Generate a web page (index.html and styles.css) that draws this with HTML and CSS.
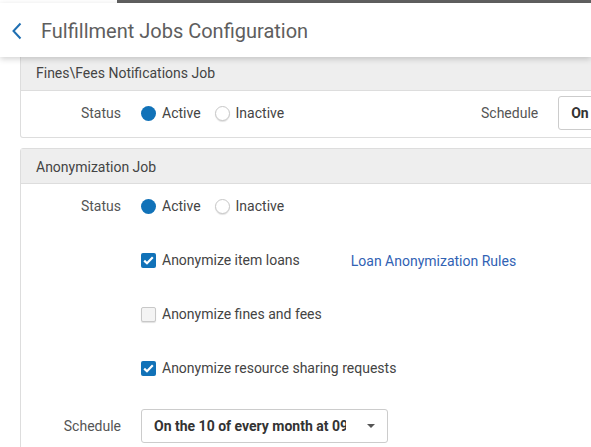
FILE: index.html
```html
<!DOCTYPE html>
<html>
<head>
<meta charset="utf-8">
<link rel="stylesheet" href="styles.css">
</head>
<body>
<div class="topstrip"><div class="strip-gap"></div><div class="strip-bar"></div></div>
<header class="pagehead">
  <svg class="back" width="12" height="18" viewBox="0 0 12 18"><path d="M9.5 1.5 L2.5 9 L9.5 16.5" fill="none" stroke="#1f6fb2" stroke-width="2"/></svg>
  <h1 class="title">Fulfillment Jobs Configuration</h1>
</header>
<main class="content">
  <section class="card card-first">
    <div class="card-head">Fines\Fees Notifications Job</div>
    <div class="card-body grid3">
      <div class="label">Status</div>
      <div class="radios">
        <span class="radio on"></span><span class="opt">Active</span>
        <span class="radio off"></span><span class="opt">Inactive</span>
      </div>
      <div class="sched">
        <span class="label2">Schedule</span>
        <div class="select narrow"><span class="sel-text">On the 1 of every month at 09:00</span></div>
      </div>
    </div>
  </section>
  <section class="card">
    <div class="card-head">Anonymization Job</div>
    <div class="card-body rows">
      <div class="row">
        <div class="label">Status</div>
        <div class="radios">
          <span class="radio on"></span><span class="opt">Active</span>
          <span class="radio off"></span><span class="opt">Inactive</span>
        </div>
      </div>
      <div class="row">
        <div class="label"></div>
        <div class="checkline">
          <span class="check on"><svg width="11" height="9" viewBox="0 0 11 9"><path d="M1.2 4.6 L4 7.3 L9.8 1.3" fill="none" stroke="#fff" stroke-width="2.2"/></svg></span>
          <span class="opt">Anonymize item loans</span>
          <a class="link">Loan Anonymization Rules</a>
        </div>
      </div>
      <div class="row">
        <div class="label"></div>
        <div class="checkline">
          <span class="check off"></span>
          <span class="opt">Anonymize fines and fees</span>
        </div>
      </div>
      <div class="row">
        <div class="label"></div>
        <div class="checkline">
          <span class="check on"><svg width="11" height="9" viewBox="0 0 11 9"><path d="M1.2 4.6 L4 7.3 L9.8 1.3" fill="none" stroke="#fff" stroke-width="2.2"/></svg></span>
          <span class="opt">Anonymize resource sharing requests</span>
        </div>
      </div>
      <div class="row row-sched">
        <div class="label">Schedule</div>
        <div class="select">
          <span class="sel-text">On the 10 of every month at 09:00</span>
          <span class="caret"></span>
        </div>
      </div>
    </div>
  </section>
</main>
</body>
</html>
```
FILE: styles.css
```css
html, body {
  margin: 0;
  padding: 0;
  background: #fff;
  overflow: hidden;
  width: 591px;
  height: 447px;
  font-family: Roboto, "Liberation Sans", Arial, sans-serif;
  color: #444;
  font-size: 14px;
}
.topstrip {
  display: flex;
  height: 3px;
}
.strip-gap { width: 117px; }
.strip-bar { flex: 1; background: #616161; }
.pagehead {
  position: relative;
  z-index: 2;
  height: 54px;
  display: flex;
  align-items: center;
  background: #fff;
  box-shadow: 0 2px 6px rgba(0,0,0,0.18);
}
.back {
  margin-left: 11px;
  margin-right: 18px;
  margin-top: 2px;
}
.title {
  margin: 0;
  font-weight: 400;
  font-size: 20px;
  color: #5e5e5e;
  margin-top: 1px;
}
.content {
  padding-left: 20px;
  width: 640px;
}
.card {
  border: 1px solid #ddd;
  border-radius: 3px;
  background: #fff;
  margin-bottom: 10px;
}
.card-first {
  border-top: none;
  border-radius: 0 0 3px 3px;
}
.card-head {
  height: 34px;
  line-height: 36px;
  background: #eeeeee;
  border-bottom: 1px solid #ddd;
  padding-left: 15px;
  color: #444;
}
.card-first .card-head { height: 33px; line-height: 32px; }
.label {
  text-align: right;
  color: #555;
}
.grid3 {
  display: grid;
  grid-template-columns: 100px 320px auto;
  column-gap: 20px;
  align-items: center;
  height: 44px;
  padding-bottom: 2px;
}
.sched {
  display: flex;
  align-items: center;
  gap: 20px;
}
.label2 { color: #555; }
.radios {
  display: flex;
  align-items: center;
}
.radio {
  width: 15px;
  height: 15px;
  border-radius: 50%;
  box-sizing: border-box;
  margin-right: 6px;
}
.radio.on { background: #1172b8; }
.radio.off {
  border: 1px solid #c8c8c8;
  background: #fff;
  box-shadow: 0 1px 1px rgba(0,0,0,0.12);
  margin-left: 14px;
}
.opt { color: #444; }
.rows {
  padding-top: 6px;
  display: flex;
  flex-direction: column;
  gap: 22px;
  padding-bottom: 10px;
}
.row {
  display: grid;
  grid-template-columns: 100px auto;
  column-gap: 20px;
  align-items: center;
  height: 32px;
}
.row-sched {
  height: 34px;
  margin-top: 3px;
}
.checkline {
  display: flex;
  align-items: center;
}
.check {
  width: 15px;
  height: 15px;
  border-radius: 2px;
  box-sizing: border-box;
  margin-right: 6px;
  display: flex;
  align-items: center;
  justify-content: center;
}
.check.on { background: #1172b8; }
.check.off {
  border: 1px solid #c8c8c8;
  background: #f4f4f4;
  box-shadow: 0 1px 1px rgba(0,0,0,0.12);
}
.link {
  color: #3162b4;
  margin-left: 51px;
  margin-top: 2px;
}
.select {
  width: 247px;
  height: 34px;
  box-sizing: border-box;
  border: 1px solid #ccc;
  border-radius: 3px;
  display: flex;
  align-items: center;
  padding-left: 12px;
  position: relative;
}
.select.narrow { width: 200px; }
.sel-text {
  font-weight: 700;
  color: #333;
  white-space: nowrap;
  overflow: hidden;
  width: 192px;
}
.caret {
  margin-left: 21px;
  width: 0;
  height: 0;
  border-left: 4px solid transparent;
  border-right: 4px solid transparent;
  border-top: 4px solid #555;
}
```
